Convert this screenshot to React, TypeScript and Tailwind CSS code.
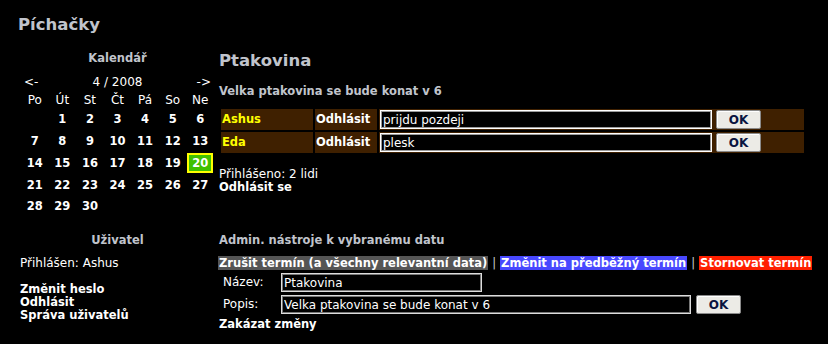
const days = ["Po", "Út", "St", "Čt", "Pá", "So", "Ne"];
const weeks: (number | null)[][] = [
  [null, 1, 2, 3, 4, 5, 6],
  [7, 8, 9, 10, 11, 12, 13],
  [14, 15, 16, 17, 18, 19, 20],
  [21, 22, 23, 24, 25, 26, 27],
  [28, 29, 30, null, null, null, null],
];

const people = [
  { name: "Ashus", note: "prijdu pozdeji" },
  { name: "Eda", note: "plesk" },
];

const OkButton = () => (
  <button
    type="button"
    className="w-[45px] h-[19px] bg-[#ecebe6] border border-[#8a8a8a] rounded-[2px] shadow-[inset_1px_1px_0_#fff] text-[12px] font-bold text-[#0a1440] leading-none"
  >
    OK
  </button>
);

const App = () => {
  return (
    <div className="w-[828px] h-[344px] bg-black overflow-hidden font-['DejaVu_Sans',Verdana,sans-serif] text-[12px] leading-[13px] text-white">
      <div className="h-[40px] pl-[18px] pt-[15px]">
        <h1 className="text-[16.5px] leading-[19px] font-bold text-[#c0c4cc]">Píchačky</h1>
      </div>
      <div className="flex">
        {/* left column */}
        <div className="w-[218px] shrink-0">
          <div className="pl-[21px] w-[214px]">
            <p className="mt-[12px] text-center text-[11.5px] font-bold text-[#c0c4cc]">Kalendář</p>
            <div className="mt-[11px] flex justify-between px-[3px]">
              <span>&lt;-</span>
              <span>4 / 2008</span>
              <span>-&gt;</span>
            </div>
            <div className="mt-[5px] grid grid-cols-7">
              {days.map((d) => (
                <span key={d} className="text-center">
                  {d}
                </span>
              ))}
            </div>
            <div className="mt-[2px] text-[11.5px] font-bold">
              {weeks.map((w, i) => (
                <div key={i} className="grid grid-cols-7 h-[21.75px] items-center">
                  {w.map((d, j) =>
                    d === 20 ? (
                      <span key={j} className="justify-self-center w-[26px] h-[20px] flex items-center justify-center bg-[#40c000] border-2 border-[#ffff00]">
                        {d}
                      </span>
                    ) : (
                      <span key={j} className="text-center">
                        {d ?? ""}
                      </span>
                    )
                  )}
                </div>
              ))}
            </div>
            <p className="mt-[16px] text-center text-[11.5px] font-bold text-[#c0c4cc]">Uživatel</p>
          </div>
          <div className="pl-[20px]">
            <p className="mt-[10px]">Přihlášen: Ashus</p>
            <div className="mt-[13px] text-[11.5px] font-bold">
              <p>Změnit heslo</p>
              <p>Odhlásit</p>
              <p>Správa uživatelů</p>
            </div>
          </div>
        </div>

        {/* right column */}
        <div className="flex-1">
          <h2 className="mt-[11px] pl-[1px] text-[16.5px] leading-[19px] font-bold text-[#c0c4cc]">Ptakovina</h2>
          <p className="mt-[14.5px] pl-[1px] text-[11.5px] font-bold text-[#c0c4cc]">Velka ptakovina se bude konat v 6</p>
          <div className="mt-[11.5px] pl-[3px] flex flex-col gap-[2px]">
            {people.map((p) => (
              <div key={p.name} className="flex gap-[2px] h-[21px]">
                <div className="w-[92px] bg-[#3f2000] pl-[1px] flex items-center text-[11.5px] font-bold text-[#ffff00]">{p.name}</div>
                <div className="w-[62px] bg-[#3f2000] pl-[1px] flex items-center text-[11.5px] font-bold">Odhlásit</div>
                <div className="w-[425px] bg-[#3f2000] pl-[1px] flex items-center gap-[4px]">
                  <input
                    readOnly
                    value={p.note}
                    className="w-[332px] h-[19px] bg-black text-white border border-white shadow-[inset_0_0_0_1px_#9a9a9a] px-[2px] text-[12px] outline-none"
                  />
                  <OkButton />
                </div>
              </div>
            ))}
          </div>
          <p className="mt-[14.5px] pl-[1px]">Přihlášeno: 2 lidi</p>
          <p className="pl-[1px] text-[11.5px] font-bold">Odhlásit se</p>
          <p className="mt-[40px] pl-[1px] text-[11.5px] font-bold text-[#c0c4cc]">Admin. nástroje k vybranému datu</p>
          <div className="mt-[9.5px] flex items-center h-[14px] leading-[14px] text-[11.5px] font-bold">
            <span className="bg-[#555555] px-[1px]">Zrušit termín (a všechny relevantní data)</span>
            <span className="px-[4px] font-normal text-[#cccccc]">|</span>
            <span className="bg-[#4848ff] px-[1px]">Změnit na předběžný termín</span>
            <span className="px-[4px] font-normal text-[#cccccc]">|</span>
            <span className="bg-[#ff2000] px-[1px]">Stornovat termín</span>
          </div>
          <div className="mt-[2px] pl-[3px] flex flex-col gap-[1px]">
            <div className="flex items-center h-[21px]">
              <span className="w-[60px] pl-[2px]">Název:</span>
              <input
                readOnly
                value="Ptakovina"
                className="w-[201px] h-[19px] bg-black text-white border border-[#dddddd] shadow-[inset_0_0_0_1px_#777] px-[2px] text-[12px] outline-none"
              />
            </div>
            <div className="flex items-center h-[21px] gap-[5px]">
              <span className="w-[55px] pl-[2px]">Popis:</span>
              <input
                readOnly
                value="Velka ptakovina se bude konat v 6"
                className="w-[410px] h-[19px] bg-black text-white border border-[#dddddd] shadow-[inset_0_0_0_1px_#777] px-[2px] text-[12px] outline-none"
              />
              <OkButton />
            </div>
          </div>
          <p className="mt-[2.5px] pl-[1px] text-[11.5px] font-bold">Zakázat změny</p>
        </div>
      </div>
    </div>
  );
};

export default App;
